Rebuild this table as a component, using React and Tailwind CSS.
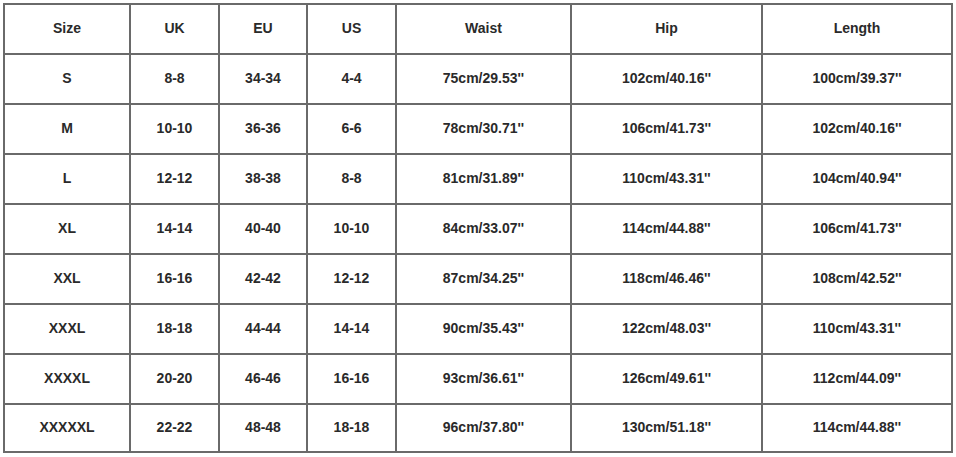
export default function App() {
  const header = ["Size", "UK", "EU", "US", "Waist", "Hip", "Length"];
  const rows = [
    ["S", "8-8", "34-34", "4-4", "75cm/29.53''", "102cm/40.16''", "100cm/39.37''"],
    ["M", "10-10", "36-36", "6-6", "78cm/30.71''", "106cm/41.73''", "102cm/40.16''"],
    ["L", "12-12", "38-38", "8-8", "81cm/31.89''", "110cm/43.31''", "104cm/40.94''"],
    ["XL", "14-14", "40-40", "10-10", "84cm/33.07''", "114cm/44.88''", "106cm/41.73''"],
    ["XXL", "16-16", "42-42", "12-12", "87cm/34.25''", "118cm/46.46''", "108cm/42.52''"],
    ["XXXL", "18-18", "44-44", "14-14", "90cm/35.43''", "122cm/48.03''", "110cm/43.31''"],
    ["XXXXL", "20-20", "46-46", "16-16", "93cm/36.61''", "126cm/49.61''", "112cm/44.09''"],
    ["XXXXXL", "22-22", "48-48", "18-18", "96cm/37.80''", "130cm/51.18''", "114cm/44.88''"],
  ];
  const all = [header, ...rows];
  return (
    <div className="w-[956px] h-[457px] bg-white pl-[3px] pt-[3px]" style={{ fontFamily: '"Liberation Sans", Arial, sans-serif' }}>
      <div className="grid grid-cols-[126px_89px_88px_89px_175px_191px_190px] grid-rows-[50px_repeat(7,50px)_48px] w-[950px] border-l-2 border-t-2 border-[#6a6a6a]">
        {all.map((r, i) =>
          r.map((c, j) => (
            <div
              key={i + "-" + j}
              className="flex items-center justify-center border-r-2 border-b-2 border-[#6a6a6a] text-[14px] font-bold text-[#2a2a2a] pb-[1px]"
            >
              {c}
            </div>
          ))
        )}
      </div>
    </div>
  );
}
